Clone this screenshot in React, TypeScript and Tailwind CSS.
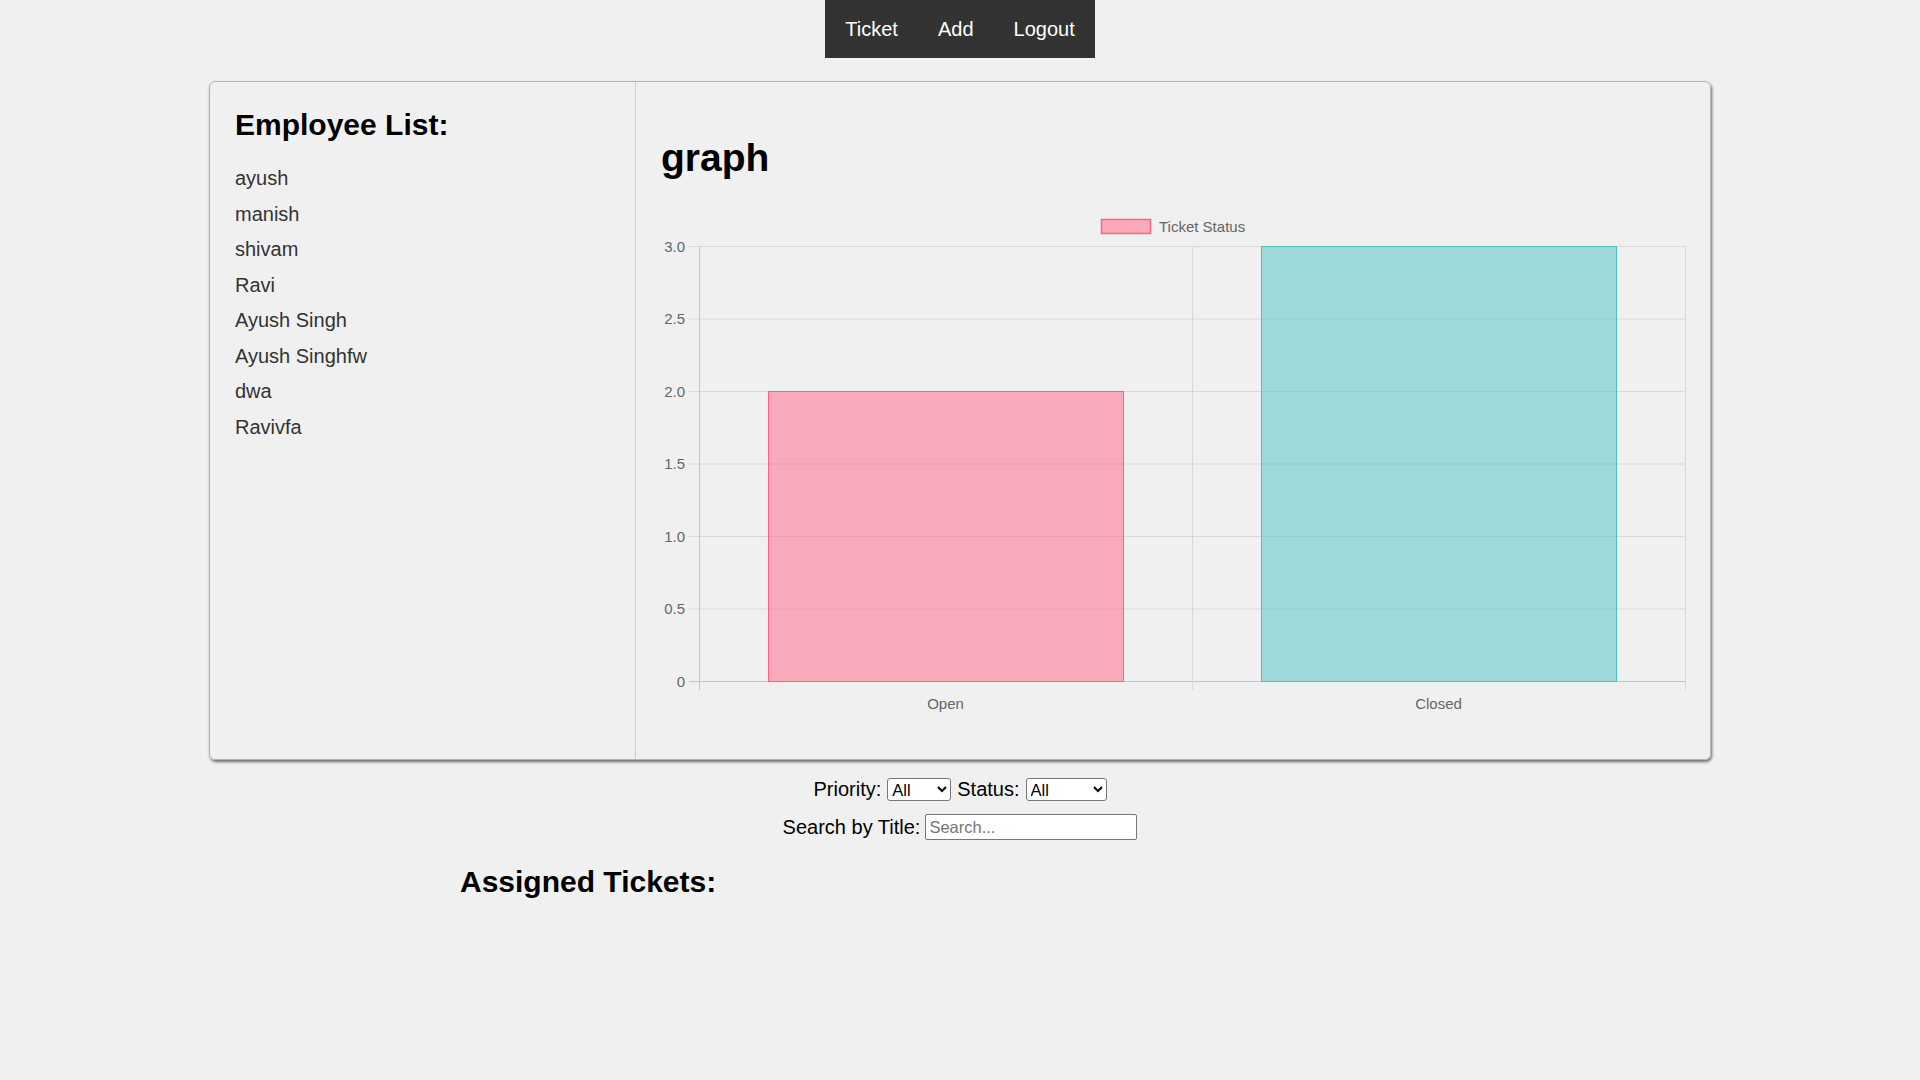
import React, { useState } from 'react';

const employees = ['ayush', 'manish', 'shivam', 'Ravi', 'Ayush Singh', 'Ayush Singhfw', 'dwa', 'Ravivfa'];

// chart geometry (local svg coords)
const ZERO_Y = 476;
const STEP = 72.5; // px per 0.5
const LEFT = 38;
const RIGHT = 1024;
const MID = 531;

function TicketChart() {
    const ticks = [0, 0.5, 1, 1.5, 2, 2.5, 3];
    return (
        <svg width={1025} height={530} className="block" style={{ fontFamily: '"Liberation Sans", Arial, sans-serif' }}>
            {/* legend */}
            <rect x={440.5} y={14.5} width={49} height={14} fill="rgba(255,99,132,0.5)" stroke="rgb(255,99,132)" strokeWidth={1.5} />
            <text x={498} y={27} fontSize={15} fill="#666">Ticket Status</text>

            {/* horizontal grid + y labels */}
            {ticks.map((t, i) => {
                const y = ZERO_Y - i * STEP + 0.5;
                return (
                    <g key={t}>
                        <line x1={28} x2={RIGHT + 0.5} y1={y} y2={y} stroke={i === 0 ? '#c4c4c4' : '#d9d9d9'} strokeWidth={1} />
                        <text x={24} y={y + 5} fontSize={15} fill="#666" textAnchor="end">
                            {t === 0 ? '0' : t.toFixed(1)}
                        </text>
                    </g>
                );
            })}

            {/* vertical grid */}
            {[LEFT, MID, RIGHT].map((x, i) => (
                <line key={x} x1={x + 0.5} x2={x + 0.5} y1={41} y2={ZERO_Y + 9} stroke={i === 0 ? '#c4c4c4' : '#d9d9d9'} strokeWidth={1} />
            ))}

            {/* bars */}
            <rect x={107.5} y={ZERO_Y - 4 * STEP + 0.5} width={355} height={4 * STEP} fill="rgba(255,99,132,0.5)" stroke="rgb(255,99,132)" strokeWidth={1} />
            <rect x={600.5} y={ZERO_Y - 6 * STEP + 0.5} width={355} height={6 * STEP} fill="rgba(75,192,192,0.5)" stroke="rgb(75,192,192)" strokeWidth={1} />

            {/* x labels */}
            <text x={284.5} y={504} fontSize={15} fill="#666" textAnchor="middle">Open</text>
            <text x={777.5} y={504} fontSize={15} fill="#666" textAnchor="middle">Closed</text>
        </svg>
    );
}

export default function App() {
    const [priority, setPriority] = useState('All');
    const [status, setStatus] = useState('All');
    const [search, setSearch] = useState('');

    return (
        <div className="min-h-screen bg-[#f0f0f0] text-black font-['Liberation_Sans',Arial,sans-serif]">
            {/* nav */}
            <div className="flex justify-center">
                <nav className="flex h-[58px] items-center bg-[#333]">
                    <a className="px-[20px] text-[20px] text-white">Ticket</a>
                    <a className="px-[20px] text-[20px] text-white">Add</a>
                    <a className="px-[20px] text-[20px] text-white">Logout</a>
                </nav>
            </div>

            {/* card */}
            <div className="mx-auto mt-[23px] flex h-[679px] w-[1502px] rounded-[6px] border border-[#b4b4b4] shadow-[1px_2px_3px_rgba(0,0,0,0.55)]">
                <div className="w-[426px] border-r border-[#cfcfcf] pl-[25px] pt-[26px]">
                    <h2 className="text-[30px] font-bold leading-[34px]">Employee List:</h2>
                    <ul className="mt-[19px]">
                        {employees.map(name => (
                            <li key={name} className="text-[20px] leading-[35.5px] text-[#333]">{name}</li>
                        ))}
                    </ul>
                </div>
                <div className="flex-1 pl-[25px] pt-[53px]">
                    <h1 className="text-[39px] font-bold leading-[45px]">graph</h1>
                    <div className="mt-[25px]">
                        <TicketChart />
                    </div>
                </div>
            </div>

            {/* filters */}
            <div className="mt-[18px] flex items-center justify-center gap-[6px] text-[20px] leading-[23px]">
                <span>Priority:</span>
                <select
                    value={priority}
                    onChange={e => setPriority(e.target.value)}
                    className="h-[23px] w-[64px] rounded-[3px] border border-[#767676] bg-white text-[16.5px] text-black"
                >
                    <option>All</option>
                    <option>Low</option>
                    <option>High</option>
                </select>
                <span>Status:</span>
                <select
                    value={status}
                    onChange={e => setStatus(e.target.value)}
                    className="h-[23px] w-[81px] rounded-[3px] border border-[#767676] bg-white text-[16.5px] text-black"
                >
                    <option>All</option>
                    <option>Open</option>
                    <option>Closed</option>
                </select>
            </div>
            <div className="mt-[13px] flex items-center justify-center gap-[5px] text-[20px] leading-[26px]">
                <span>Search by Title:</span>
                <input
                    value={search}
                    onChange={e => setSearch(e.target.value)}
                    placeholder="Search..."
                    className="h-[26px] w-[212px] rounded-[2px] border border-[#767676] bg-white px-[3px] text-[16.5px] placeholder:text-[#757575]"
                />
            </div>

            {/* tickets */}
            <div className="mx-auto mt-[25px] w-[1000px]">
                <h2 className="text-[30px] font-bold leading-[34px]">Assigned Tickets:</h2>
            </div>
        </div>
    );
}
